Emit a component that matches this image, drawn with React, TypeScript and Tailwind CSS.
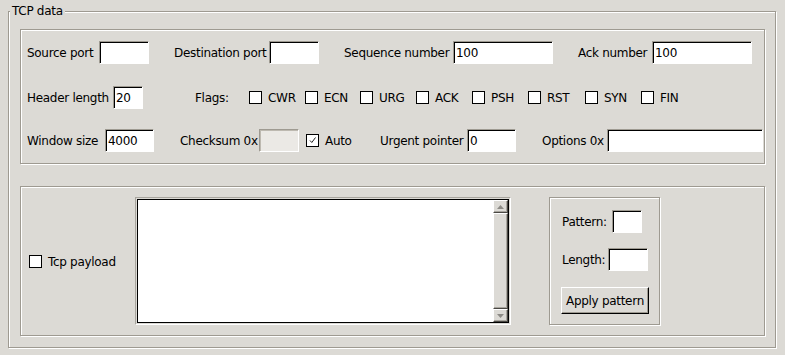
import React from "react";

const groove = "border border-[#9e9a91] shadow-[1px_1px_0_#fff,inset_1px_1px_0_#fff]";
const sunken =
  "h-[23px] flex items-center px-[2px] border border-t-[#9e9a91] border-l-[#9e9a91] border-r-white border-b-white shadow-[inset_1px_1px_0_#000] bg-white";
const raised =
  "bg-[#dcdad5] border border-t-white border-l-white border-b-[#4a4843] border-r-[#4a4843] shadow-[inset_-1px_-1px_0_#a8a59e]";

function Field({ label, lw, w, value }: { label: string; lw: string; w: string; value?: string }) {
  return (
    <div className="flex items-center">
      <span className={`${lw} whitespace-nowrap`}>{label}</span>
      <div className={`${sunken} ${w}`}>{value}</div>
    </div>
  );
}

function Check({ checked }: { checked?: boolean }) {
  return (
    <div className="w-[13px] h-[13px] shrink-0 border border-black bg-white flex items-center justify-center">
      {checked && (
        <svg width="11" height="11" viewBox="0 0 11 11">
          <path d="M3 5.5 L4.8 7.5 L8.5 2.5" fill="none" stroke="#222" strokeWidth="1" />
        </svg>
      )}
    </div>
  );
}

const flags = [
  { name: "CWR", w: "w-[56px]" },
  { name: "ECN", w: "w-[55px]" },
  { name: "URG", w: "w-[56px]" },
  { name: "ACK", w: "w-[56px]" },
  { name: "PSH", w: "w-[56px]" },
  { name: "RST", w: "w-[57px]" },
  { name: "SYN", w: "w-[56px]" },
  { name: "FIN", w: "w-auto" },
];

function Arrow({ up }: { up?: boolean }) {
  return (
    <svg width="7" height="4" viewBox="0 0 7 4">
      <path d={up ? "M0 4 L3.5 0 L7 4 Z" : "M0 0 L3.5 4 L7 0 Z"} fill="#8c8a85" />
    </svg>
  );
}

export default function App() {
  return (
    <div
      className="w-[785px] h-[355px] overflow-hidden bg-[#dcdad5] pt-[11px] pl-[8px] text-[12px] tracking-[-0.3px] text-black"
      style={{ fontFamily: '"DejaVu Sans", Verdana, sans-serif' }}
    >
      <div className={`${groove} w-[768px] h-[337px]`}>
        <span className="block w-fit -mt-[8px] ml-[1px] px-[2px] bg-[#dcdad5] leading-[14px]">TCP data</span>

        {/* header fields */}
        <div className={`${groove} ml-[11px] mt-[11px] w-[745px] h-[135px]`}>
          <div className="flex items-center h-[23px] mt-[11px] pl-[6px]">
            <Field label="Source port" lw="w-[72px]" w="w-[50px]" />
            <div className="ml-[25px]">
              <Field label="Destination port" lw="w-[95px]" w="w-[50px]" />
            </div>
            <div className="ml-[25px]">
              <Field label="Sequence number" lw="w-[109px]" w="w-[100px]" value="100" />
            </div>
            <div className="ml-[25px]">
              <Field label="Ack number" lw="w-[74px]" w="w-[100px]" value="100" />
            </div>
          </div>

          <div className="flex items-center h-[23px] mt-[22px] pl-[6px]">
            <Field label="Header length" lw="w-[86px]" w="w-[30px]" value="20" />
            <span className="ml-[52px] w-[54px]">Flags:</span>
            {flags.map((f) => (
              <div key={f.name} className={`${f.w} flex items-center gap-[6px]`}>
                <Check />
                <span>{f.name}</span>
              </div>
            ))}
          </div>

          <div className="flex items-center h-[23px] mt-[20px] pl-[6px]">
            <Field label="Window size" lw="w-[78px]" w="w-[49px]" value="4000" />
            <div className="ml-[26px] flex items-center">
              <span className="w-[79px] whitespace-nowrap">Checksum 0x</span>
              <div className="h-[23px] w-[40px] border border-t-[#9e9a91] border-l-[#9e9a91] border-r-white border-b-white shadow-[inset_1px_1px_0_#bdb9b0] bg-[#ebe9e5]" />
            </div>
            <div className="ml-[7px] w-[74px] flex items-center gap-[6px]">
              <Check checked />
              <span>Auto</span>
            </div>
            <Field label="Urgent pointer" lw="w-[87px]" w="w-[49px]" value="0" />
            <div className="ml-[26px]">
              <Field label="Options 0x" lw="w-[65px]" w="w-[156px]" />
            </div>
          </div>
        </div>

        {/* payload */}
        <div className={`${groove} ml-[11px] mt-[22px] w-[745px] h-[150px] flex pt-[10px] pl-[8px]`}>
          <div className="w-[106px] h-[128px] flex items-center gap-[6px] pt-px">
            <Check />
            <span>Tcp payload</span>
          </div>

          <div className="w-[376px] h-[128px] border border-t-[#a8a59e] border-l-[#a8a59e] border-r-white border-b-white p-px">
            <div className="h-full flex border border-black bg-white">
              <div className="flex-1" />
              <div className="w-[15px] flex flex-col bg-[#dcdad5]">
                <div className={`${raised} h-[13px] flex items-center justify-center`}>
                  <Arrow up />
                </div>
                <div className={`${raised} flex-1`} />
                <div className={`${raised} h-[13px] flex items-center justify-center`}>
                  <Arrow />
                </div>
              </div>
            </div>
          </div>

          <div className={`${groove} ml-[38px] w-[111px] h-[128px] pl-[12px] pt-[12px]`}>
            <div className="flex items-center h-[23px]">
              <span className="w-[50px]">Pattern:</span>
              <div className={`${sunken} w-[30px]`} />
            </div>
            <div className="flex items-center h-[23px] mt-[15px]">
              <span className="w-[46px]">Length:</span>
              <div className={`${sunken} w-[40px]`} />
            </div>
            <button className="mt-[16px] -ml-[1px] w-[88px] h-[27px] bg-[#dcdad5] border border-t-white border-l-white border-b-black border-r-black shadow-[inset_-1px_-1px_0_#9e9a91] whitespace-nowrap">
              Apply pattern
            </button>
          </div>
        </div>
      </div>
    </div>
  );
}
